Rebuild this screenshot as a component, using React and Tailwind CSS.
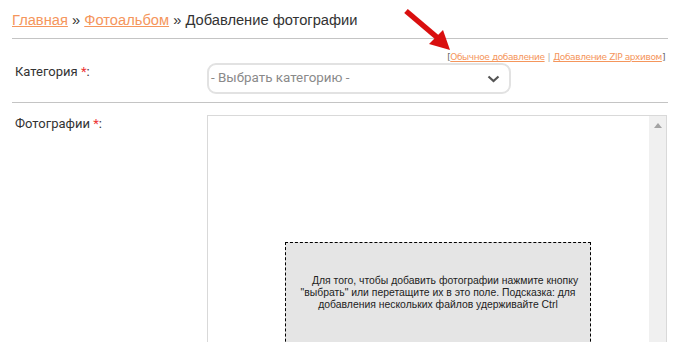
import React from "react";

export default function App() {
  return (
    <div className="relative w-[680px] h-[342px] overflow-hidden bg-white" style={{ fontFamily: "Roboto, 'Liberation Sans', sans-serif" }}>
      <div className="px-3 pt-[11px]">
        <div className="h-[28px] border-b border-[#c4c4c4] text-[14.7px] leading-[18px] text-[#333]" style={{ fontFamily: "'Liberation Sans', Arial, sans-serif" }}>
          <a className="text-[#f5965c] underline">Главная</a>
          <span> » </span>
          <a className="text-[#f5965c] underline">Фотоальбом</a>
          <span> » Добавление фотографии</span>
        </div>
        <div className="flex justify-end pr-[3px] mt-[12px] h-[12px] text-[9px] leading-[12px] text-[#666]" style={{ fontFamily: "'DejaVu Sans', Verdana, sans-serif", letterSpacing: "-0.4px" }}>
          <span>[</span>
          <a className="text-[#f5965c] underline">Обычное добавление</a>
          <span className="text-[#aaa] px-[3px]">|</span>
          <a className="text-[#f5965c] underline">Добавление ZIP архивом</a>
          <span>]</span>
        </div>
        <div className="flex h-[40px] border-b border-[#c4c4c4]">
          <div className="w-[195px] pl-[3px] pt-[1px] text-[13px] leading-[16px] text-[#333]">
            Категория <span className="text-[#e33]">*</span>:
          </div>
          <div className="w-[304px] h-[31px] border-2 border-[#e2e2e2] rounded-[9px] flex items-center justify-between pl-[2px] pr-[8px] text-[13.4px] text-[#8a8a8a]">
            <span>- Выбрать категорию -</span>
            <svg width="13" height="8" viewBox="0 0 13 8" className="mr-[1px]">
              <path d="M1.5 1.5 L6.5 6 L11.5 1.5" fill="none" stroke="#555" strokeWidth="2.2" />
            </svg>
          </div>
        </div>
        <div className="flex pt-[12px]">
          <div className="w-[195px] pl-[3px] pt-[1px] text-[13px] leading-[16px] text-[#333]">
            Фотографии <span className="text-[#e33]">*</span>:
          </div>
          <div className="flex w-[460px] h-[260px] border border-[#d9d9d9]">
            <div className="flex-1">
              <div
                className="ml-[77px] mt-[126px] w-[306px] h-[120px] border border-dashed border-black bg-[#e5e5e5] pt-[32px] px-[4px] text-center text-[10.4px] leading-[12px] text-[#222]"
                style={{ fontFamily: "'Liberation Sans', Arial, sans-serif", textIndent: "14px" }}
              >
                Для того, чтобы добавить фотографии нажмите кнопку "выбрать" или перетащите их в это поле. Подсказка: для добавления нескольких файлов удерживайте Ctrl
              </div>
            </div>
            <div className="w-[17px] bg-[#f0f0f0] flex justify-center pt-[7px]">
              <svg width="8" height="5" viewBox="0 0 8 5">
                <path d="M0 5 L4 0 L8 5 Z" fill="#a3a3a3" />
              </svg>
            </div>
          </div>
        </div>
      </div>
      <svg className="absolute left-[399px] top-[5px]" width="56" height="50" viewBox="0 0 56 50">
        <path d="M7 6 L40 34" stroke="#d90f0f" strokeWidth="5.5" strokeLinecap="butt" />
        <path d="M51 45 L30 39 L44 25 Z" fill="#d90f0f" />
      </svg>
    </div>
  );
}
